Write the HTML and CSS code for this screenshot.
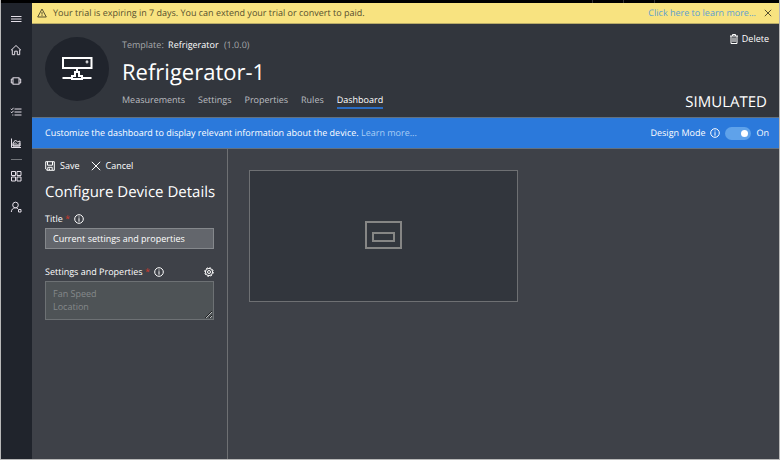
FILE: index.html
```html
<!DOCTYPE html>
<html lang="en">
<head>
<meta charset="utf-8">
<title>Refrigerator-1</title>
<link rel="stylesheet" href="styles.css">
</head>
<body>
<div class="topbar"><i></i><i></i><i></i></div>
<div class="app">
  <nav class="rail" aria-label="Main">
    <button class="rail-item" aria-label="Menu"><svg width="12" height="12" viewBox="0 0 12 12"><path d="M1 3.500h10.500M1 6h10.500M1 8.500h10.500"/></svg></button>
    <a class="rail-item" href="#" aria-label="Home"><svg width="12" height="12" viewBox="0 0 12 12"><path d="M1 6.300L6 1.500l5 4.800M2.300 5.500v5.200h2.400V7.200h2.600v3.500h2.400V5.500"/></svg></a>
    <a class="rail-item" href="#" aria-label="Devices"><svg width="12" height="12" viewBox="0 0 12 12"><rect x="3" y="2.800" width="6" height="6.400"/><path d="M3 4H1.300v4H3M9 4h1.700v4H9"/></svg></a>
    <a class="rail-item" href="#" aria-label="Device sets"><svg width="12" height="12" viewBox="0 0 12 12"><path d="M4.500 3h7M4.500 6h7M4.500 9h7M.8 2.800l1 1 1.700-2M.8 5.800l1 1 1.700-2M2.300 9h1"/></svg></a>
    <a class="rail-item" href="#" aria-label="Analytics"><svg width="12" height="12" viewBox="0 0 12 12"><path d="M1.500 1.500v9h9.500"/><path d="M3 9V6l2.500-3 2 2L10 4v5z"/><path d="M3 9V7l2.500-1.300L7.500 7.500 10 6v3z" fill="currentColor" fill-opacity=".5" stroke-opacity=".5"/></svg></a>
    <hr class="rail-rule">
    <a class="rail-item" href="#" aria-label="Application builder"><svg width="12" height="12" viewBox="0 0 12 12"><path d="M1.500 1.500h4v4h-4zM7 1.500h4v4H7zM1.500 7h4v4h-4zM7 7h4v4H7z"/></svg></a>
    <a class="rail-item" href="#" aria-label="Administration"><svg width="12" height="12" viewBox="0 0 12 12"><circle cx="5.500" cy="4" r="2.800"/><path d="M1.300 11c.2-2.500 1.600-4.200 4.200-4.200 1 0 1.800.3 2.500.9M8.500 8.500H11V11H8.500z"/></svg></a>
  </nav>

  <div class="page">
    <div class="notice">
      <svg width="10" height="10" viewBox="0 0 10 10"><path d="M5 1L9.300 9H.7zM5 4v2.600M5 7.200v.9"/></svg>
      <span>Your trial is expiring in 7 days. You can extend your trial or convert to paid.</span>
      <a class="push" href="#">Click here to learn more...</a>
      <button class="icon-button" aria-label="Dismiss"><svg width="8" height="8" viewBox="0 0 8 8"><path d="M.8.8l6.400 6.400M7.200.8L.8 7.200"/></svg></button>
    </div>

    <header class="device">
      <div class="avatar">
        <svg width="32" height="26" viewBox="0 0 32 26"><path d="M2 2h28.500v10H2zM16 12v4M14 20v-4h4v4h3v3H11v-3zM1.500 22H11M21 22h9.500"/><circle cx="26" cy="6" r=".4"/></svg>
      </div>
      <div class="identity">
        <p class="template">Template: <strong>Refrigerator</strong> <span class="version">(1.0.0)</span></p>
        <h1>Refrigerator-1</h1>
        <nav class="tabs" aria-label="Device">
          <a href="#">Measurements</a><a href="#">Settings</a><a href="#">Properties</a><a href="#">Rules</a><a href="#" class="active" aria-current="page">Dashboard</a>
        </nav>
      </div>
      <div class="side">
        <button class="command"><svg width="8" height="10" viewBox="0 0 8 10"><path d="M0 2h8M2.500 2V.5h3V2M1 2v7.500h6V2M3 3.500V8M5 3.500V8"/></svg>Delete</button>
        <span class="status">SIMULATED</span>
      </div>
    </header>

    <div class="design">
      <span class="hint">Customize the dashboard to display relevant information about the device. <a href="#">Learn more...</a></span>
      <label class="push" for="mode">Design Mode</label>
      <svg class="info" width="10" height="10" viewBox="0 0 10 10"><circle cx="5" cy="5" r="4.300"/><path d="M5 2.500v1M5 4.200v3.500"/></svg>
      <input class="toggle" id="mode" type="checkbox" role="switch" checked>
      <span>On</span>
    </div>

    <main class="work">
      <form class="panel">
        <div class="commands">
          <button type="button" class="command"><svg width="10" height="10" viewBox="0 0 10 10"><path d="M.7.700h8.600v8.600H2L.7 8zM2.500.700v3.500h5V.700M2.800 9V6.300h4.400V9M4.500 7.500V9"/></svg>Save</button>
          <button type="button" class="command"><svg width="10" height="10" viewBox="0 0 10 10"><path d="M.8.8l8.400 8.400M9.200.8L.8 9.200"/></svg>Cancel</button>
        </div>
        <h2>Configure Device Details</h2>
        <div class="label-row">
          <label for="title">Title <b>*</b></label>
          <svg class="info" width="10" height="10" viewBox="0 0 10 10"><circle cx="5" cy="5" r="4.300"/><path d="M5 2.500v1M5 4.200v3.500"/></svg>
        </div>
        <input class="field" id="title" type="text" value="Current settings and properties">
        <div class="label-row">
          <label for="props">Settings and Properties <b>*</b></label>
          <svg class="info" width="10" height="10" viewBox="0 0 10 10"><circle cx="5" cy="5" r="4.300"/><path d="M5 2.500v1M5 4.200v3.500"/></svg>
          <button type="button" class="icon-button push" aria-label="Choose settings and properties"><svg width="10" height="10" viewBox="0 0 10 10"><circle cx="5" cy="5" r="3.600"/><circle cx="5" cy="5" r="1.500"/><circle cx="5" cy="5" r="4.300" stroke-dasharray="1.700 1.677"/></svg></button>
        </div>
        <textarea class="field area" id="props" rows="2" disabled>Fan Speed
Location</textarea>
      </form>
      <section class="canvas">
        <div class="tile">
          <svg width="37" height="28" viewBox="0 0 37 28"><path d="M1 1h35v26H1zM8 12h21v8H8z"/></svg>
        </div>
      </section>
    </main>
  </div>
</div>
</body>
</html>
```
FILE: styles.css
```css
* { box-sizing: border-box; }

body {
  margin: 0;
  min-height: 100vh;
  display: flex;
  flex-direction: column;
  border: solid #b9b9b9;
  border-width: 0 1px 1px;
  background: #3e4148;
  color: #fff;
  font: 9px/12px "Open Sans", "Noto Sans", sans-serif;
  text-rendering: geometricPrecision;
}

button, input, textarea { font: inherit; color: inherit; }

button {
  display: flex;
  align-items: center;
  padding: 0;
  border: 0;
  background: none;
}

a { color: inherit; text-decoration: none; }
p, h1, h2 { margin: 0; font-weight: 400; }

svg {
  flex: none;
  fill: none;
  stroke: currentColor;
  stroke-width: 1;
}

.push { margin-left: auto; }

.topbar {
  display: flex;
  justify-content: flex-end;
  gap: 30px;
  height: 3px;
  padding-right: 124px;
  background: #000;
}
.topbar i { width: 1px; background: #333; }

.app { flex: 1; display: flex; }

.rail {
  flex: none;
  width: 31px;
  padding-right: 1px;
  background: #20242c;
  color: #e4dfe8;
}
.rail-item {
  display: flex;
  align-items: center;
  justify-content: center;
  width: 100%;
  height: 31px;
}
.rail-rule {
  width: 11px;
  height: 1px;
  margin: 1px auto 0;
  border: 0;
  background: #73767b;
}

.page {
  flex: 1;
  min-width: 0;
  display: flex;
  flex-direction: column;
}

.notice {
  display: flex;
  align-items: center;
  gap: 6px;
  height: 21px;
  padding: 0 7px 0 5px;
  border-bottom: 1px solid #b9ac68;
  background: #f8e380;
  color: #57502f;
}
.notice a { color: #5c9fd0; }
.notice .icon-button { margin-left: 2px; }

.device {
  display: flex;
  min-height: 93px;
  padding: 9px 10px 6px 13px;
  background: #32363d;
}
.avatar {
  flex: none;
  display: flex;
  align-items: center;
  justify-content: center;
  width: 64px;
  height: 64px;
  margin-top: 4px;
  border-radius: 50%;
  background: #20242c;
}
.avatar svg { stroke-width: 2; }
.identity { padding: 6px 0 0 13px; }
.template { color: #a5a7aa; }
.template strong { margin: 0 3px 0 2px; color: #fff; font-weight: 400; }
h1 { margin-top: 5px; font-size: 22px; line-height: 32px; }

.tabs {
  display: flex;
  gap: 13px;
  margin-top: 6px;
  color: #bcbec1;
}
.tabs a { padding-bottom: 1px; border-bottom: 2px solid transparent; }
.tabs .active { border-color: #2b6dc4; color: #fff; }

.side {
  display: flex;
  flex-direction: column;
  align-items: flex-end;
  justify-content: space-between;
  margin-left: auto;
}
.command { gap: 4px; }
.status { padding-right: 2px; font-size: 15px; line-height: 18px; }

.design {
  display: flex;
  align-items: center;
  gap: 5px;
  height: 32px;
  padding: 0 10px 0 13px;
  border: solid #63717f;
  border-width: 1px 0;
  background: #2b79db;
}
.design .hint a { color: #a9cdf5; }

.toggle {
  appearance: none;
  flex: none;
  display: flex;
  align-items: center;
  width: 26px;
  height: 13px;
  margin: 0;
  padding: 0 3px;
  border-radius: 7px;
  background: #5fa2ea;
}
.toggle::before {
  content: "";
  width: 7px;
  height: 7px;
  border-radius: 50%;
  background: #fff;
}
.toggle:checked::before { margin-left: auto; }

.work { flex: 1; display: flex; }

.panel {
  flex: none;
  width: 196px;
  padding: 11px 13px;
  border-right: 1px solid #6e7073;
}
.commands { display: flex; gap: 11px; }
.commands .command { gap: 5px; }
h2 { margin: 9px 0 10px; font-size: 15px; line-height: 22px; white-space: nowrap; }

.label-row {
  display: flex;
  align-items: center;
  gap: 4px;
  margin-bottom: 3px;
}
.label-row b { color: #d23a2a; font-weight: 400; }

.field {
  display: block;
  width: 100%;
  height: 21px;
  margin: 0 0 17px;
  padding: 0 7px;
  border: 1px solid #85888c;
  border-radius: 0;
  background: #63666c;
}
.area {
  height: 39px;
  padding: 5px 7px;
  border-color: #6d7174;
  background: #4e5356;
  color: #85898b;
  line-height: 13px;
  resize: vertical;
}

.canvas { flex: 1; padding: 21px; }
.tile {
  display: flex;
  align-items: center;
  justify-content: center;
  width: 269px;
  height: 132px;
  padding-bottom: 2px;
  border: 1px solid #6e7073;
  background: #32363d;
  color: #868685;
}
.tile svg { stroke-width: 2; }
```
